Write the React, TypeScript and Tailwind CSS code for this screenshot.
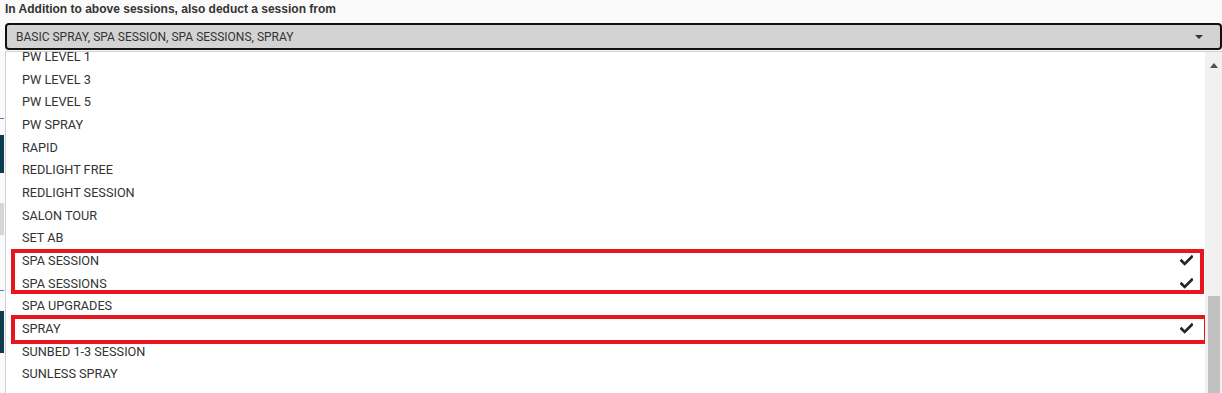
import React from "react";

const options = [
  { label: "PW LEVEL 1" },
  { label: "PW LEVEL 3" },
  { label: "PW LEVEL 5" },
  { label: "PW SPRAY" },
  { label: "RAPID" },
  { label: "REDLIGHT FREE" },
  { label: "REDLIGHT SESSION" },
  { label: "SALON TOUR" },
  { label: "SET AB" },
  { label: "SPA SESSION", selected: true },
  { label: "SPA SESSIONS", selected: true },
  { label: "SPA UPGRADES" },
  { label: "SPRAY", selected: true },
  { label: "SUNBED 1-3 SESSION" },
  { label: "SUNLESS SPRAY" },
];

const Check = () => (
  <svg viewBox="0 0 16 16" className="h-[13px] w-[13px]">
    <path d="M1.8 8.2 L5.8 12.2 L14.6 3.4" fill="none" stroke="#262626" strokeWidth="3.4" strokeLinecap="square" />
  </svg>
);

export default function App() {
  return (
    <div className="relative h-[393px] w-[1222px] overflow-hidden bg-[#fafafa] font-['Roboto',sans-serif] text-[#333]">
      {/* page underneath the open menu */}
      <div className="pt-[2px]">
        <div className="px-[5px] font-['Liberation_Sans',Arial,sans-serif] text-[12px] font-bold leading-[14px] text-[#333]">
          In Addition to above sessions, also deduct a session from
        </div>
        <div className="ml-[5px] mt-[7px] flex h-[27px] w-[1217px] items-center justify-between rounded-[4px] border-2 border-[#111] bg-[#d3d3d3] pl-[9px] pr-[17px]">
          <span className="text-[12px] leading-none text-[#333]">BASIC SPRAY, SPA SESSION, SPA SESSIONS, SPRAY</span>
          <span className="h-0 w-0 border-x-[4px] border-t-[4px] border-x-transparent border-t-[#333]" />
        </div>
        <div className="mt-[68px] h-[1px] w-[4px] bg-[#3b82c4]" />
        <div className="mt-[16px] h-[38px] w-[4px] bg-[#0d3b4f]" />
        <div className="mt-[30px] h-[32px] w-[4px] bg-[#d6d6d6]" />
        <div className="mt-[55px] h-[1px] w-[4px] bg-[#3b82c4]" />
        <div className="mt-[20px] h-[42px] w-[4px] bg-[#0d3b4f]" />
      </div>

      {/* open dropdown menu */}
      <div className="absolute bottom-0 left-[5px] right-0 top-[51px] flex overflow-hidden border-l border-t border-[#d0d0d0] bg-white">
        <div className="relative flex-1 overflow-hidden">
          <ul className="-mt-[7px]">
            {options.map((o) => (
              <li key={o.label} className="flex h-[22.7px] items-center justify-between pl-[16px] pr-[12px] text-[12.7px] text-[#333]">
                <span>{o.label}</span>
                {o.selected && <Check />}
              </li>
            ))}
          </ul>
          {/* annotation boxes */}
          <div className="absolute left-[5px] top-[197px] h-[45px] w-[1193px] border-4 border-[#e8141e]" />
          <div className="absolute left-[5px] top-[263px] h-[29px] w-[1197px] border-4 border-[#e8141e]" />
        </div>
        <div className="flex w-[17px] flex-col items-center bg-[#f1f1f1]">
          <span className="mt-[11px] h-0 w-0 border-x-[4px] border-b-[5px] border-x-transparent border-b-[#505050]" />
          <div className="mt-[228px] h-[120px] w-[12px] bg-[#c1c1c1]" />
        </div>
      </div>
    </div>
  );
}
